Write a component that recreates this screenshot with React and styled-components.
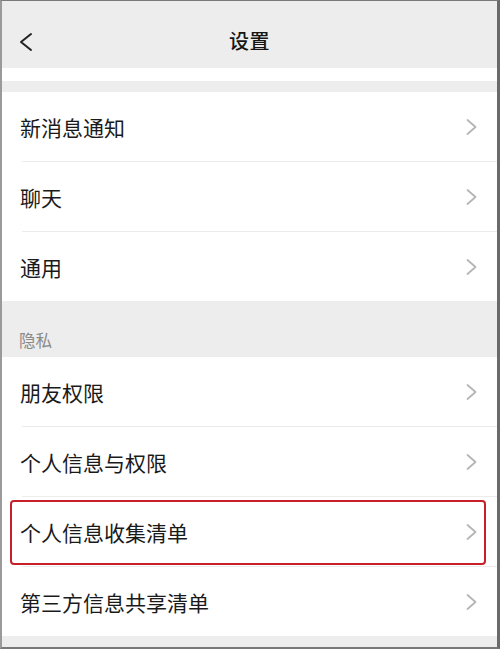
import React from "react";
import styled, { createGlobalStyle } from "styled-components";

const GlobalStyle = createGlobalStyle`
  html, body { margin: 0; padding: 0; background: #ffffff; }
  * { box-sizing: border-box; }
  body { font-family: "Noto Sans CJK SC", "Noto Sans", sans-serif; }
`;

const Frame = styled.div`
  width: 500px;
  height: 649px;
  overflow: hidden;
  background: #ededed;
  border-top: 1px solid #7a7a7a;
  border-right: 3px solid #6a6a6a;
  border-bottom: 2px solid #787878;
  border-left: 2px solid #9a9a9a;
  display: flex;
  flex-direction: column;
`;

const Header = styled.header`
  position: relative;
  height: 67px;
  flex: none;
  background: #ededed;
  display: flex;
  align-items: center;
  justify-content: center;
`;

const BackButton = styled.button`
  position: absolute;
  left: 15px;
  top: 31px;
  width: 18px;
  height: 20px;
  padding: 0;
  border: 0;
  background: transparent;
  display: flex;
  align-items: center;
  justify-content: center;
`;

const Title = styled.h1`
  margin: 0;
  margin-top: 12px;
  font-size: 20px;
  font-weight: 500;
  color: #151515;
  letter-spacing: 0.5px;
  line-height: 28px;
`;

const WhiteStrip = styled.div`
  height: 13px;
  flex: none;
  background: #ffffff;
`;

const Gap = styled.div`
  height: ${(p) => p.$h}px;
  flex: none;
  background: #ededed;
`;

const Group = styled.section`
  background: #ffffff;
  flex: none;
  display: flex;
  flex-direction: column;
`;

const Row = styled.div`
  position: relative;
  height: 69px;
  flex: none;
  display: flex;
  align-items: center;
  justify-content: space-between;
  padding: 0 20px 0 18px;
  background: #ffffff;
`;

const Label = styled.span`
  font-size: 21px;
  color: #1a1a1a;
  line-height: 30px;
  font-weight: 400;
`;

const Divider = styled.div`
  height: 1px;
  flex: none;
  margin-left: 20px;
  background: #ececec;
`;

const SectionTitle = styled.div`
  height: 56px;
  flex: none;
  background: #ededed;
  display: flex;
  align-items: flex-end;
  padding: 0 0 6px 17px;
  font-size: 16.5px;
  line-height: 22px;
  color: #8a8a8a;
`;

const Highlight = styled.div`
  position: absolute;
  top: 3px;
  bottom: 1px;
  left: 8px;
  right: 11px;
  border: 2px solid #c8202a;
  border-radius: 4px;
  pointer-events: none;
`;

const Filler = styled.div`
  flex: 1;
  background: #ededed;
`;

const BackIcon = () => (
  <svg width="16" height="20" viewBox="0 0 16 20">
    <polyline
      points="13,2 3,10 13,18"
      fill="none"
      stroke="#222"
      strokeWidth="2"
      strokeLinecap="round"
      strokeLinejoin="round"
    />
  </svg>
);

const Chevron = () => (
  <svg width="11" height="16" viewBox="0 0 11 16">
    <polyline
      points="1.5,1 9.5,8 1.5,15"
      fill="none"
      stroke="#b4b4b4"
      strokeWidth="1.7"
      strokeLinecap="round"
      strokeLinejoin="round"
    />
  </svg>
);

const Item = ({ label, highlighted }) => (
  <Row>
    <Label>{label}</Label>
    <Chevron />
    {highlighted && <Highlight />}
  </Row>
);

const ListGroup = ({ items }) => (
  <Group>
    {items.map((it, i) => (
      <React.Fragment key={it.label}>
        {i > 0 && <Divider />}
        <Item label={it.label} highlighted={it.highlighted} />
      </React.Fragment>
    ))}
  </Group>
);

const general = [
  { label: "新消息通知" },
  { label: "聊天" },
  { label: "通用" },
];

const privacy = [
  { label: "朋友权限" },
  { label: "个人信息与权限" },
  { label: "个人信息收集清单", highlighted: true },
  { label: "第三方信息共享清单" },
];

export default function App() {
  return (
    <>
      <GlobalStyle />
      <Frame>
        <Header>
          <BackButton aria-label="返回">
            <BackIcon />
          </BackButton>
          <Title>设置</Title>
        </Header>
        <WhiteStrip />
        <Gap $h={11} />
        <ListGroup items={general} />
        <SectionTitle>隐私</SectionTitle>
        <ListGroup items={privacy} />
        <Filler />
      </Frame>
    </>
  );
}
